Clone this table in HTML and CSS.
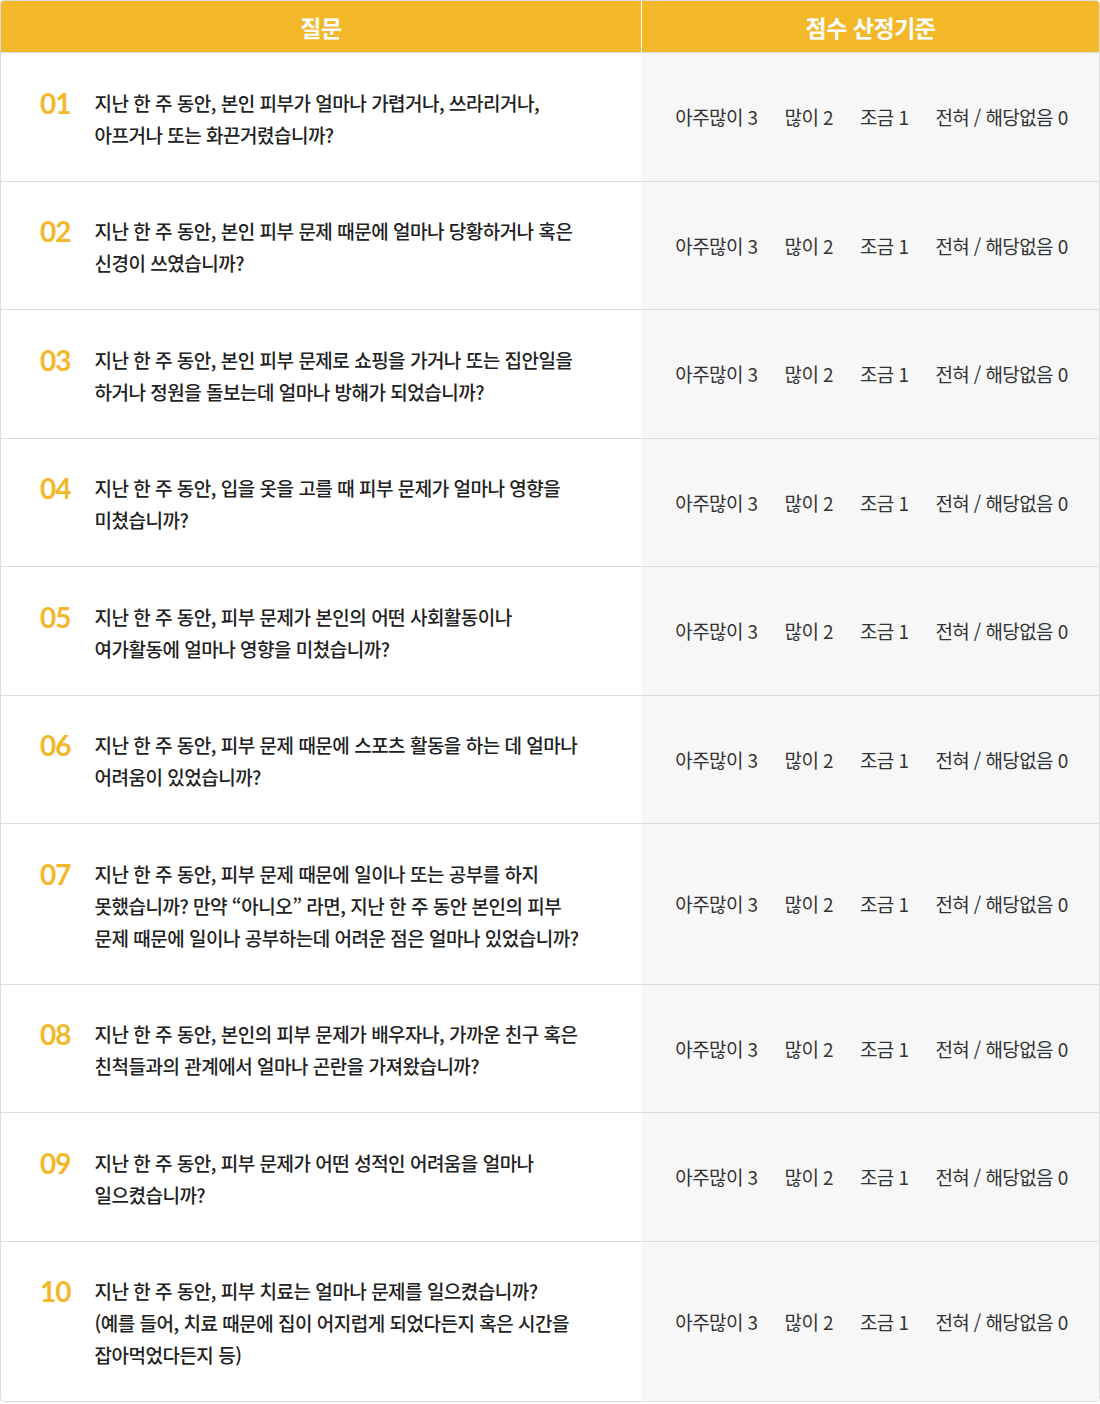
FILE: index.html
```html
<!doctype html>
<html lang="ko">
  <head>
    <meta charset="UTF-8" />
    <title>피부 문제 설문</title>
    <link rel="stylesheet" href="styles.css">
  </head>
  <body>
    <div class="survey">
      <div class="survey-head">
        <div class="th th-question">질문</div>
        <div class="th">점수 산정기준</div>
      </div>

      <div class="row">
        <div class="question"><span class="num">01</span><p>지난 한 주 동안, 본인 피부가 얼마나 가렵거나, 쓰라리거나,<br>아프거나 또는 화끈거렸습니까?</p></div>
        <div class="score"><span>아주많이 3</span><span>많이 2</span><span>조금 1</span><span>전혀 / 해당없음 0</span></div>
      </div>

      <div class="row">
        <div class="question"><span class="num">02</span><p>지난 한 주 동안, 본인 피부 문제 때문에 얼마나 당황하거나 혹은<br>신경이 쓰였습니까?</p></div>
        <div class="score"><span>아주많이 3</span><span>많이 2</span><span>조금 1</span><span>전혀 / 해당없음 0</span></div>
      </div>

      <div class="row">
        <div class="question"><span class="num">03</span><p>지난 한 주 동안, 본인 피부 문제로 쇼핑을 가거나 또는 집안일을<br>하거나 정원을 돌보는데 얼마나 방해가 되었습니까?</p></div>
        <div class="score"><span>아주많이 3</span><span>많이 2</span><span>조금 1</span><span>전혀 / 해당없음 0</span></div>
      </div>

      <div class="row">
        <div class="question"><span class="num">04</span><p>지난 한 주 동안, 입을 옷을 고를 때 피부 문제가 얼마나 영향을<br>미쳤습니까?</p></div>
        <div class="score"><span>아주많이 3</span><span>많이 2</span><span>조금 1</span><span>전혀 / 해당없음 0</span></div>
      </div>

      <div class="row">
        <div class="question"><span class="num">05</span><p>지난 한 주 동안, 피부 문제가 본인의 어떤 사회활동이나<br>여가활동에 얼마나 영향을 미쳤습니까?</p></div>
        <div class="score"><span>아주많이 3</span><span>많이 2</span><span>조금 1</span><span>전혀 / 해당없음 0</span></div>
      </div>

      <div class="row">
        <div class="question"><span class="num">06</span><p>지난 한 주 동안, 피부 문제 때문에 스포츠 활동을 하는 데 얼마나<br>어려움이 있었습니까?</p></div>
        <div class="score"><span>아주많이 3</span><span>많이 2</span><span>조금 1</span><span>전혀 / 해당없음 0</span></div>
      </div>

      <div class="row">
        <div class="question"><span class="num">07</span><p>지난 한 주 동안, 피부 문제 때문에 일이나 또는 공부를 하지<br>못했습니까? 만약 “아니오” 라면, 지난 한 주 동안 본인의 피부<br>문제 때문에 일이나 공부하는데 어려운 점은 얼마나 있었습니까?</p></div>
        <div class="score"><span>아주많이 3</span><span>많이 2</span><span>조금 1</span><span>전혀 / 해당없음 0</span></div>
      </div>

      <div class="row">
        <div class="question"><span class="num">08</span><p>지난 한 주 동안, 본인의 피부 문제가 배우자나, 가까운 친구 혹은<br>친척들과의 관계에서 얼마나 곤란을 가져왔습니까?</p></div>
        <div class="score"><span>아주많이 3</span><span>많이 2</span><span>조금 1</span><span>전혀 / 해당없음 0</span></div>
      </div>

      <div class="row">
        <div class="question"><span class="num">09</span><p>지난 한 주 동안, 피부 문제가 어떤 성적인 어려움을 얼마나<br>일으켰습니까?</p></div>
        <div class="score"><span>아주많이 3</span><span>많이 2</span><span>조금 1</span><span>전혀 / 해당없음 0</span></div>
      </div>

      <div class="row">
        <div class="question"><span class="num">10</span><p>지난 한 주 동안, 피부 치료는 얼마나 문제를 일으켰습니까?<br>(예를 들어, 치료 때문에 집이 어지럽게 되었다든지 혹은 시간을<br>잡아먹었다든지 등)</p></div>
        <div class="score"><span>아주많이 3</span><span>많이 2</span><span>조금 1</span><span>전혀 / 해당없음 0</span></div>
      </div>
    </div>
  </body>
</html>
```

FILE: styles.css
```css
:root {
  --yellow: #f3b82a;
  --line: #dcdcdc;
  --score-bg: #f7f7f7;
  --text: #222;
}

* {
  margin: 0;
  padding: 0;
  box-sizing: border-box;
}

body {
  font-family: "Noto Sans CJK KR", "Noto Sans", sans-serif;
  color: var(--text);
  background: #fff;
}

.survey {
  width: 1100px;
  border: 1px solid var(--line);
  border-radius: 4px;
  overflow: hidden;
}

.survey-head {
  display: grid;
  grid-template-columns: 641px 1fr;
  background-color: var(--yellow);
  height: 51px;
}

.th {
  display: flex;
  align-items: center;
  justify-content: center;
  color: #fff;
  font-size: 23px;
  font-weight: 700;
  letter-spacing: -0.5px;
}

.th-question {
  border-right: 1px solid #fff;
}

.row {
  display: grid;
  grid-template-columns: 641px 1fr;
  border-top: 1px solid var(--line);
}

.question {
  display: flex;
  align-items: flex-start;
  gap: 24px;
  padding: 33.5px 0 30px 39px;
}

.num {
  font-family: Lato, "Noto Sans", sans-serif;
  font-size: 28px;
  font-weight: 700;
  line-height: 32px;
  color: var(--yellow);
  letter-spacing: -1px;
}

.question p {
  font-size: 19px;
  font-weight: 500;
  line-height: 32px;
  letter-spacing: -0.5px;
  white-space: nowrap;
}

.score {
  display: flex;
  align-items: center;
  justify-content: center;
  gap: 27px;
  background-color: var(--score-bg);
  font-size: 19px;
  font-weight: 400;
  color: #333;
  letter-spacing: -0.6px;
  padding-left: 2px;
}
```
